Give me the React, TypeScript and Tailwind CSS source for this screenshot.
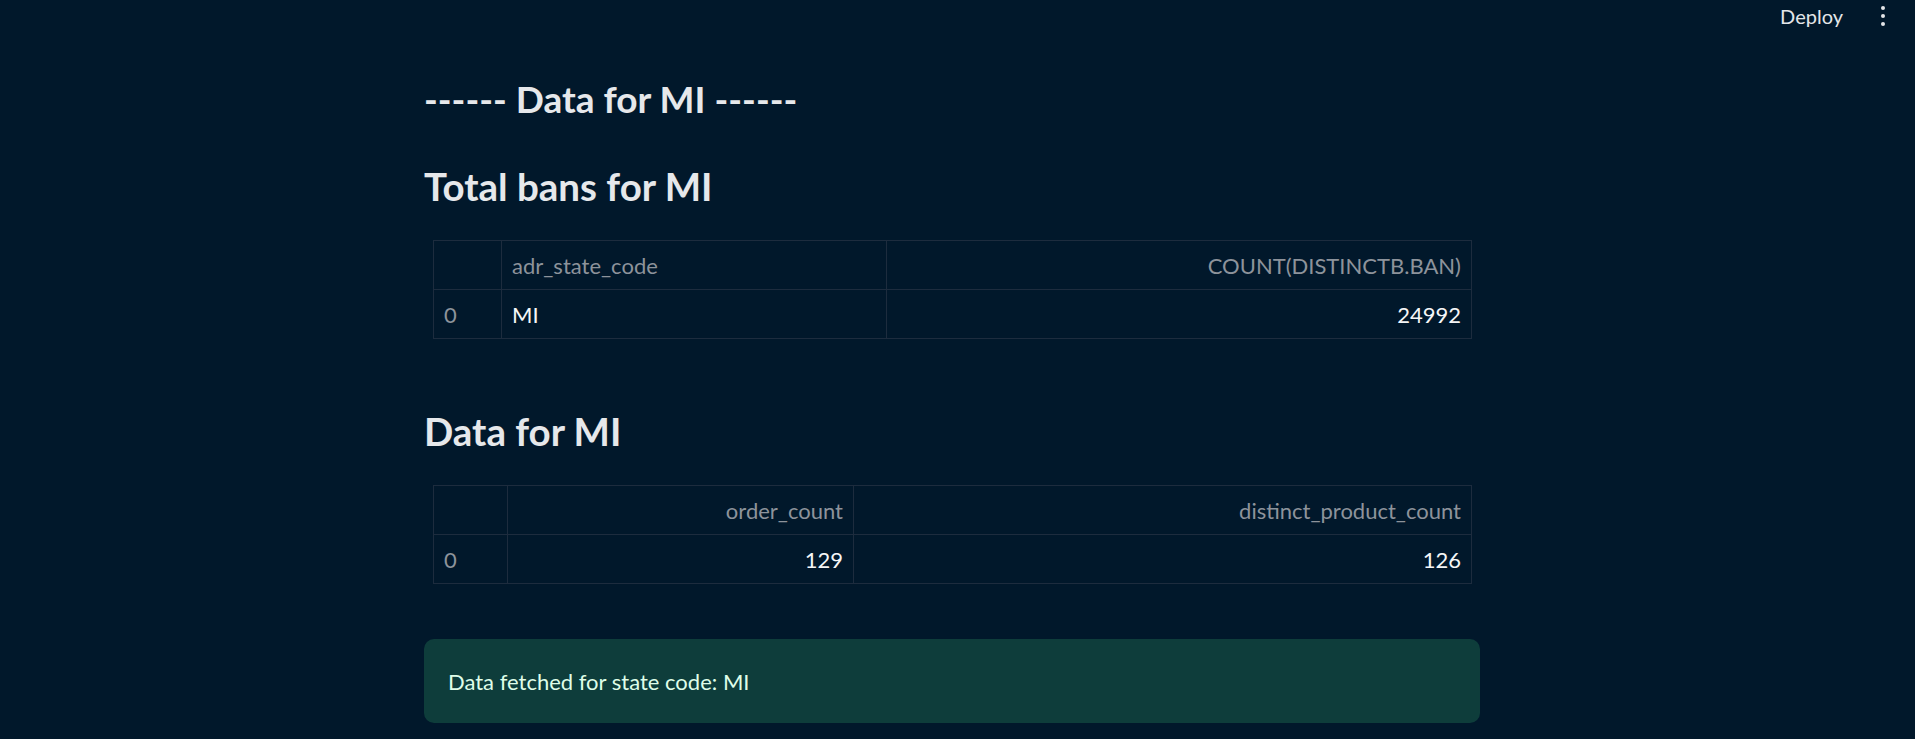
import React from 'react'

const FONT = { fontFamily: 'Lato, "Noto Sans", sans-serif' }

type Col = { label: string; width: string; align: 'left' | 'right' }

function DataTable({ cols, row }: { cols: Col[]; row: string[] }) {
  return (
    <table className="mx-[9px] w-[1038px] table-fixed border-collapse text-[22px]">
      <colgroup>
        {cols.map((c, i) => (
          <col key={i} className={c.width} />
        ))}
      </colgroup>
      <thead>
        <tr className="h-[49px]">
          {cols.map((c, i) => (
            <th
              key={i}
              className={`border border-[#1d2c3e] px-[10px] font-normal text-[#8d939b] ${
                c.align === 'right' ? 'text-right' : 'text-left'
              }`}
            >
              {c.label}
            </th>
          ))}
        </tr>
      </thead>
      <tbody>
        <tr className="h-[49px]">
          {row.map((v, i) => (
            <td
              key={i}
              className={`border border-[#1d2c3e] px-[10px] ${i === 0 ? 'text-[#8d939b]' : 'text-[#f5f6f7]'} ${
                cols[i].align === 'right' ? 'text-right' : 'text-left'
              }`}
            >
              {v}
            </td>
          ))}
        </tr>
      </tbody>
    </table>
  )
}

export default function App() {
  return (
    <div className="min-h-screen bg-[#01182b] text-[#e6e8eb]" style={FONT}>
      <header className="flex h-[32px] items-center justify-end">
        <span className="mr-[36px] text-[20px] text-[#e4e6e9]">Deploy</span>
        <button className="mr-[28px] flex h-[32px] w-[8px] flex-col items-center justify-center gap-[4px]">
          <span className="h-[4px] w-[4px] rounded-full bg-[#e4e6e9]" />
          <span className="h-[4px] w-[4px] rounded-full bg-[#e4e6e9]" />
          <span className="h-[4px] w-[4px] rounded-full bg-[#e4e6e9]" />
        </button>
      </header>

      <main className="ml-[424px] w-[1056px] pb-10">
        <h1 className="mt-[45px] text-[37px] font-bold leading-[43px]">------ Data for MI ------</h1>
        <h2 className="mt-[44px] text-[38.5px] font-bold leading-[44px]">Total bans for MI</h2>

        <div className="mt-[32px]">
          <DataTable
            cols={[
              { label: '', width: 'w-[68px]', align: 'left' },
              { label: 'adr_state_code', width: 'w-[385px]', align: 'left' },
              { label: 'COUNT(DISTINCTB.BAN)', width: 'w-[585px]', align: 'right' },
            ]}
            row={['0', 'MI', '24992']}
          />
        </div>

        <h2 className="mt-[70px] text-[38.5px] font-bold leading-[44px]">Data for MI</h2>

        <div className="mt-[32px]">
          <DataTable
            cols={[
              { label: '', width: 'w-[74px]', align: 'left' },
              { label: 'order_count', width: 'w-[346px]', align: 'right' },
              { label: 'distinct_product_count', width: 'w-[618px]', align: 'right' },
            ]}
            row={['0', '129', '126']}
          />
        </div>

        <div className="mt-[55px] flex h-[84px] items-center rounded-[10px] bg-[#0e3d3b] px-[24px] text-[22px] text-[#dffde9]">
          Data fetched for state code: MI
        </div>
      </main>
    </div>
  )
}
